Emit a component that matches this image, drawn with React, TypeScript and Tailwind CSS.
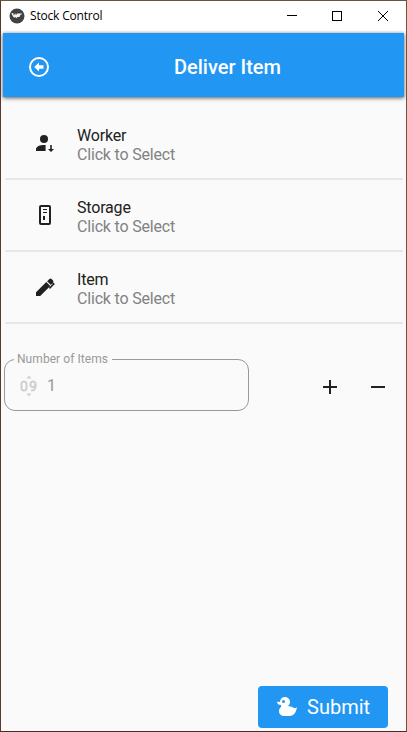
import type { ReactNode } from "react";

function Icon({ children, className = "w-6 h-6" }: { children: ReactNode; className?: string }) {
  return (
    <svg viewBox="0 0 24 24" fill="currentColor" className={`block shrink-0 ${className}`}>
      {children}
    </svg>
  );
}

function WindowBar() {
  return (
    <header className="flex h-[30px] items-center bg-white text-black">
      <svg viewBox="0 0 16 16" className="ml-2 h-4 w-4">
        <circle cx="8" cy="8" r="7.5" fill="#424242" />
        <path d="M2.300 5.300 4.200 5.100l.6 2.300L6.200 5.200l.8 2 1-1.600 5.300-.2-2.300 2-.5 1.500-2 .2-1.200 1.100-1-1.200-1.200.7L3.700 8z" fill="#f3f3f3" />
      </svg>
      <h1 className="ml-[5px] font-['Open_Sans','Noto_Sans',sans-serif] text-[12px] leading-4 tracking-[-0.18px]">Stock Control</h1>
      <svg viewBox="0 0 106 12" className="ml-auto mr-[16px] h-3 w-[106px]" fill="none" stroke="currentColor" shapeRendering="crispEdges">
        <path d="M3 5.500h10M48.500 1.500h9v9h-9z" />
        <path d="m94 1 10 10M104 1 94 11" shapeRendering="auto" />
      </svg>
    </header>
  );
}

function ListItem({ title, children }: { title: string; children: ReactNode }) {
  return (
    <li className="flex h-[72px] border-b-2 border-[#e7e7e7] pl-[30px]">
      <svg viewBox="0 0 20 20" fill="currentColor" className="mt-[25px] h-5 w-5 shrink-0">{children}</svg>
      <div className="ml-[22px] mt-[18px] text-base leading-[19px] tracking-[-0.18px]">
        <div className="text-[#212121]">{title}</div>
        <div className="text-[#828282]">Click to Select</div>
      </div>
    </li>
  );
}

export default function App() {
  return (
    <div className="flex h-[732px] w-[407px] flex-col overflow-hidden border border-t-[#67563f] border-r-[#70552b] border-b-[#4d2925] border-l-[#5a382d] bg-[#fafafa] font-['Roboto',sans-serif] text-[#212121]">
      <WindowBar />
      <nav className="mx-[2px] mt-[2px] flex h-16 shrink-0 items-center bg-[#2196f3] pl-6 pt-[4px] text-white shadow-[0_1px_4px_rgba(0,0,0,.65)]">
        <Icon>
          <circle cx="12" cy="12" r="9" fill="none" stroke="currentColor" strokeWidth="2" />
          <path d="M7.200 12 12 7.500v2.800h4.500v3.400H12v2.800z" />
        </Icon>
        <h2 className="ml-[123px] text-[20px] font-medium leading-6">Deliver Item</h2>
      </nav>
      <main className="flex flex-1 flex-col">
        <ul className="ml-1 mr-[3px] mt-[11px]">
          <ListItem title="Worker">
            <circle cx="9" cy="6" r="4" />
            <path d="M10.600 12v6H1v-1.800C1 13.500 5 12 9 12zM15.200 12h1.600v4H19l-3 3-3-3h2.200z" />
          </ListItem>
          <ListItem title="Storage">
            <rect x="5" y="1" width="10" height="18" rx="1" fill="none" stroke="currentColor" strokeWidth="2" />
            <path d="M8 4h4v1H8zM8 7h4v1H8zM8 11h2v4H8z" />
          </ListItem>
          <ListItem title="Item">
            <path d="M1 19v-3.800L11.300 5l4 4L5.200 19zM12.100 4.200l2.100-2a1.800 1.800 0 0 1 2.600 0l1.100 1.100a1.500 1.500 0 0 1 0 2.100l-1.900 2.700z" />
            <path d="m16.800 5 2 2-4.400 4.400" fill="none" stroke="currentColor" strokeWidth="1.500" />
          </ListItem>
        </ul>
        <section className="ml-[3px] mt-[26px] flex items-end">
          <fieldset className="mb-px h-[61px] w-[245px] rounded-[11px] border border-[#999] px-[9px]">
            <legend className="w-[98px] whitespace-nowrap px-[3px] text-[12px] leading-[18px] tracking-[.06px] text-[#999]">Number of Items</legend>
            <div className="flex h-9 items-center pl-[5px]">
              <svg viewBox="0 0 20 24" className="h-6 w-5 text-[#d0d0d0]">
                <path d="m7.500 4.500 2.500-3 2.500 3zm0 15 2.500 3 2.500-3z" fill="currentColor" />
                <g fill="none" stroke="currentColor" strokeWidth="2">
                  <rect x="2.500" y="7.500" width="5" height="9" rx="2.500" />
                  <rect x="11.500" y="7.500" width="5" height="5.500" rx="2.500" />
                  <path d="M16.500 10v2c0 3-1.500 4.500-4.500 4.500" />
                </g>
              </svg>
              <span className="ml-[8px] text-base text-[#999]">1</span>
            </div>
          </fieldset>
          <button aria-label="Increase" className="mb-[13px] ml-[69px]">
            <Icon><path d="M19 13h-6v6h-2v-6H5v-2h6V5h2v6h6z" /></Icon>
          </button>
          <button aria-label="Decrease" className="mb-[13px] ml-6">
            <Icon><path d="M19 13H5v-2h14z" /></Icon>
          </button>
        </section>
        <button className="mb-[3.5px] ml-auto mr-[18.5px] mt-auto flex h-[42px] w-[130px] items-center rounded bg-[#2196f3] pl-[17px] pt-px text-white">
          <Icon><path d="M8.500,5A1.500,1.500 0 0,0 7,6.500A1.500,1.500 0 0,0 8.500,8A1.500,1.500 0 0,0 10,6.500A1.500,1.500 0 0,0 8.500,5M10,2A5,5 0 0,1 15,7C15,8.700 14.150,10.200 12.860,11.100C14.440,11.250 16.220,11.610 18,12.500C21,14 22,12 22,12C22,12 21,21 15,21H9C9,21 4,21 4,16C4,13 7,12 6,10C2,10 2,6.500 2,6.500C3,7 4.240,7 5,6.650C5.190,4.050 7.360,2 10,2Z" /></Icon>
          <span className="ml-[8.500px] text-[20px] leading-6">Submit</span>
        </button>
      </main>
    </div>
  );
}
